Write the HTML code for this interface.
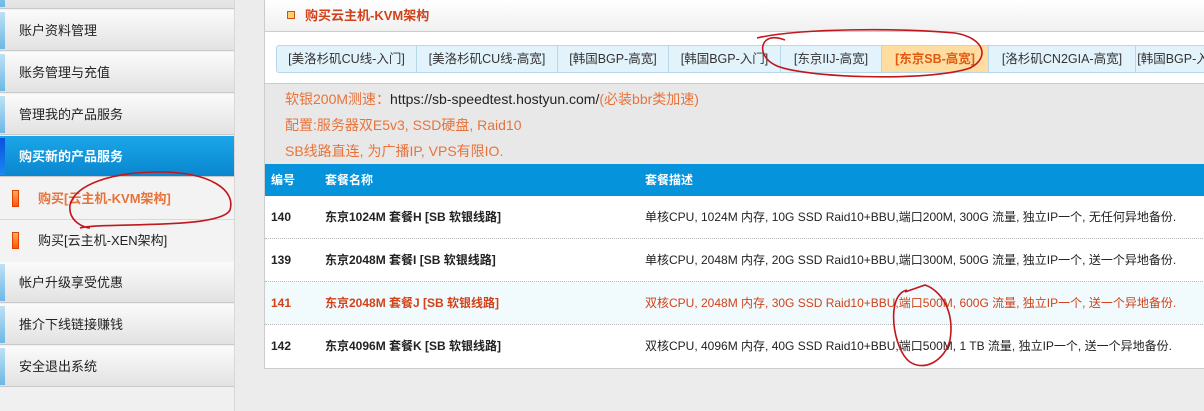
<!DOCTYPE html>
<html><head><meta charset="utf-8"><style>
*{margin:0;padding:0;box-sizing:border-box}
body{width:1204px;height:411px;overflow:hidden;background:#ececec;font-family:"Liberation Sans","Noto Sans CJK SC",sans-serif;position:relative}
.side{position:absolute;left:0;top:0;width:235px;height:411px;background:#f0f0f0;border-right:1px solid #d8d8d8}
.it{position:absolute;left:0;width:234px;height:41px;background:linear-gradient(#fbfbfb,#e2e2e2);border-bottom:1px solid #c9c9c9;font-size:13px;color:#222;line-height:41px;padding-left:19px}
.it:before{content:"";position:absolute;left:0;top:2px;width:5px;height:37px;background:linear-gradient(#bfe0f5,#6cb8e6)}
.sel{background:linear-gradient(#1aa6e8,#0a86cf);color:#fff;font-weight:bold}
.sel:before{background:linear-gradient(#0a4fe0,#1a8af0)}
.sub{position:absolute;left:0;width:234px;height:42px;background:#f3f3f3;font-size:13px;line-height:42px;padding-left:38px;color:#222}
.sub i{position:absolute;left:12px;top:12px;width:7px;height:17px;background:linear-gradient(#ffb060,#ff5500);border:1px solid #e04000}
.panel{position:absolute;left:264px;top:0;width:960px;height:369px;background:#fff;border-left:1px solid #ccc;border-bottom:1px solid #ccc}
.hd{height:32px;background:linear-gradient(#fff,#f0f0f0);border-bottom:1px solid #ccc;font-size:13px;font-weight:bold;color:#d2421a;line-height:32px;padding-left:40px;position:relative}
.hd i{position:absolute;left:22px;top:11px;width:8px;height:8px;background:#ffd070;border:1px solid #d05010}
.tabs{position:absolute;left:11px;top:45px;height:28px;display:flex;border:1px solid #b8d8ea;border-radius:3px 0 0 3px;background:#e3f3fc}
.tabs div{font-size:12.5px;color:#333;line-height:26px;border-right:1px solid #b8d8ea;text-align:center}
.tabs .on{background:#ffdca0;color:#e05a10;font-weight:bold}
.info{position:absolute;left:0;top:83px;width:960px;height:81px;background:#e8e8e8;border-top:1px solid #ccc;font-size:14px;color:#e8733a;padding:2px 0 0 20px;line-height:26px}
.th{position:absolute;left:0;top:164px;width:960px;height:32px;background:#0593dc;color:#fff;font-size:12px;font-weight:bold;line-height:32px}
.row{position:absolute;left:0;width:960px;height:43px;border-bottom:1px dotted #bbb;font-size:12px;line-height:42px;color:#222}
.c1{position:absolute;left:6px;font-weight:bold}.c2{position:absolute;left:60px;font-weight:bold}.c3{position:absolute;left:380px}
.red{background:#f1fafd;color:#d2421a}
</style></head><body>
<div class="side">
<div class="it" style="top:-32px"></div>
<div class="it" style="top:10px">账户资料管理</div>
<div class="it" style="top:52px">账务管理与充值</div>
<div class="it" style="top:94px">管理我的产品服务</div>
<div class="it sel" style="top:136px">购买新的产品服务</div>
<div class="sub" style="top:178px;color:#e8733a;font-weight:bold;border-bottom:1px solid #d8d8d8"><i></i>购买[云主机-KVM架构]</div>
<div class="sub" style="top:220px"><i></i>购买[云主机-XEN架构]</div>
<div class="it" style="top:262px">帐户升级享受优惠</div>
<div class="it" style="top:304px">推介下线链接赚钱</div>
<div class="it" style="top:346px">安全退出系统</div>
</div>
<div class="panel">
<div class="hd"><i></i>购买云主机-KVM架构</div>
<div class="tabs">
<div style="width:140px">[美洛杉矶CU线-入门]</div>
<div style="width:141px">[美洛杉矶CU线-高宽]</div>
<div style="width:111px">[韩国BGP-高宽]</div>
<div style="width:112px">[韩国BGP-入门]</div>
<div style="width:101px">[东京IIJ-高宽]</div>
<div class="on" style="width:107px">[东京SB-高宽]</div>
<div style="width:147px">[洛杉矶CN2GIA-高宽]</div>
<div style="width:90px;border-right:0">[韩国BGP-入门]</div>
</div>
<div class="info">软银200M测速：<span style="color:#222">https://sb-speedtest.hostyun.com/</span>(必装bbr类加速)<br>配置:服务器双E5v3, SSD硬盘, Raid10<br>SB线路直连, 为广播IP, VPS有限IO.</div>
<div class="th"><span class="c1">编号</span><span class="c2">套餐名称</span><span class="c3">套餐描述</span></div>
<div class="row" style="top:196px"><span class="c1">140</span><span class="c2">东京1024M 套餐H [SB 软银线路]</span><span class="c3">单核CPU, 1024M 内存, 10G SSD Raid10+BBU,端口200M, 300G 流量, 独立IP一个, 无任何异地备份.</span></div>
<div class="row" style="top:239px"><span class="c1">139</span><span class="c2">东京2048M 套餐I [SB 软银线路]</span><span class="c3">单核CPU, 2048M 内存, 20G SSD Raid10+BBU,端口300M, 500G 流量, 独立IP一个, 送一个异地备份.</span></div>
<div class="row red" style="top:282px"><span class="c1">141</span><span class="c2">东京2048M 套餐J [SB 软银线路]</span><span class="c3">双核CPU, 2048M 内存, 30G SSD Raid10+BBU,端口500M, 600G 流量, 独立IP一个, 送一个异地备份.</span></div>
<div class="row" style="top:325px;border-bottom:0"><span class="c1">142</span><span class="c2">东京4096M 套餐K [SB 软银线路]</span><span class="c3">双核CPU, 4096M 内存, 40G SSD Raid10+BBU,端口500M, 1 TB 流量, 独立IP一个, 送一个异地备份.</span></div>
</div>
<svg style="position:absolute;left:0;top:0" width="1204" height="411" fill="none" stroke="#c0171c" stroke-width="1.6">
<path d="M80 228 C100 222 220 230 230 210 C236 190 210 172 160 172 C110 172 75 185 70 205 C68 222 85 228 90 228"/>
<path d="M785 40 C760 30 755 55 775 65 C800 78 930 82 970 68 C990 58 985 38 955 33 C900 28 800 28 757 38"/>
<path d="M907 290 C885 295 893 350 910 362 C925 372 945 360 950 340 C955 310 940 290 925 285 L905 292"/>
</svg>
</body></html>
